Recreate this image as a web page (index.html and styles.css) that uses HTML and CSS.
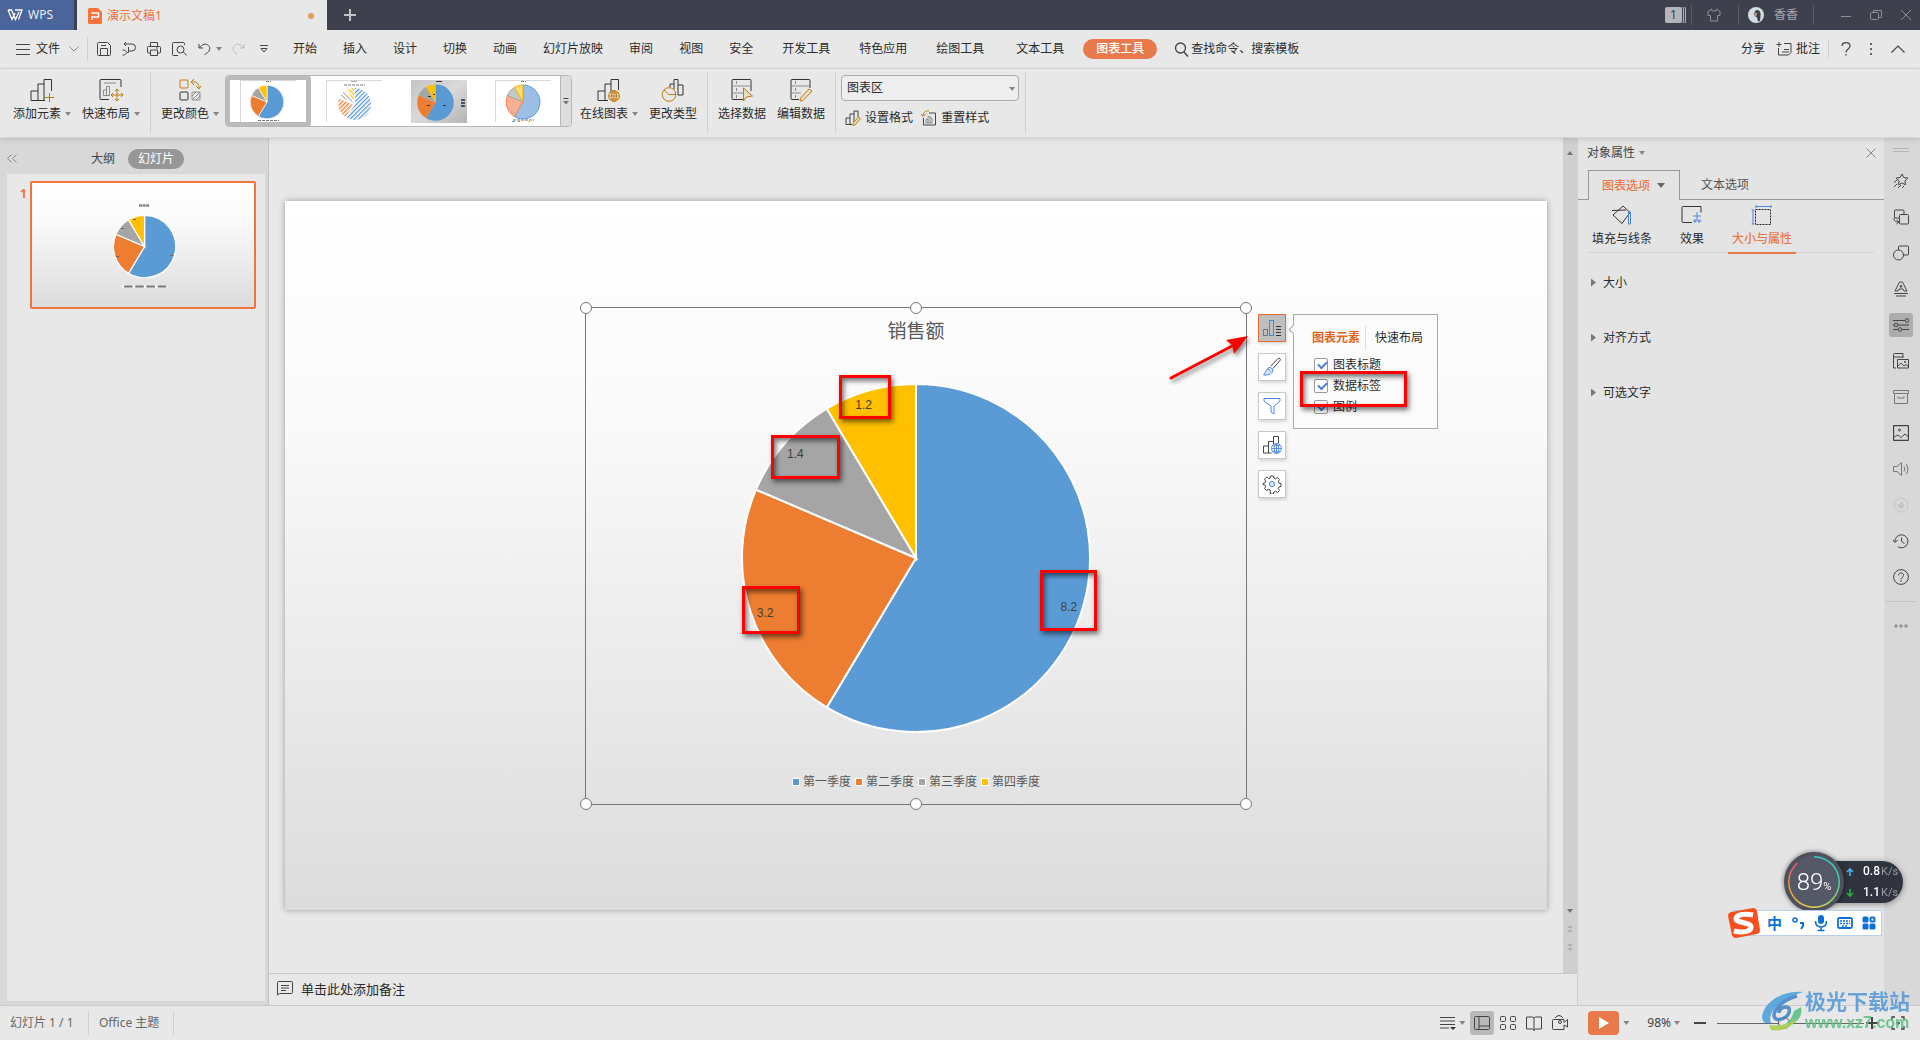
FILE: index.html
```html
<!DOCTYPE html>
<html lang="zh-CN">
<head>
<meta charset="utf-8">
<title>演示文稿1 - WPS</title>
<link rel="stylesheet" href="styles.css">
</head>
<body>
<svg class="defs" aria-hidden="true">
  <symbol id="pie" viewBox="0 0 350 350">
    <path class="q1" d="M175 175V2A173 173 0 1 1 86.3 323.5Z"/>
    <path class="q2" d="M175 175L86.3 323.5A173 173 0 0 1 15.9 107Z"/>
    <path class="q3" d="M175 175L15.9 107A173 173 0 0 1 86.3 26.5Z"/>
    <path class="q4" d="M175 175L86.3 26.5A173 173 0 0 1 175 2Z"/>
  </symbol>
  <symbol id="globe" viewBox="0 0 12 12">
    <circle cx="6" cy="6" r="5.4"/><ellipse cx="6" cy="6" rx="2.4" ry="5.4"/><path d="M6 .6v10.8M.6 6h10.8M1.6 3h8.8M1.6 9h8.8"/>
  </symbol>
  <g stroke="none">
  <pattern id="h1" width="3" height="3" patternUnits="userSpaceOnUse" patternTransform="rotate(45)"><rect width="1.3" height="3" fill="#5b9bd5"/></pattern>
  <pattern id="h2" width="3" height="3" patternUnits="userSpaceOnUse" patternTransform="rotate(45)"><rect width="1.3" height="3" fill="#ed7d31"/></pattern>
  <pattern id="h3" width="3" height="3" patternUnits="userSpaceOnUse" patternTransform="rotate(-45)"><rect width="1" height="3" fill="#a5a5a5"/></pattern>
  <pattern id="h4" width="3" height="3" patternUnits="userSpaceOnUse" patternTransform="rotate(-45)"><rect width="1.3" height="3" fill="#ffc000"/></pattern>
  </g>
  <linearGradient id="tb" x1="0" y1="0" x2="1" y2="1"><stop offset="0" stop-color="#c4c4c4"/><stop offset=".5" stop-color="#d9d9d9"/><stop offset="1" stop-color="#b4b4b4"/></linearGradient>
</svg>

<header class="titlebar">
  <button class="wps-tab"><svg width="16" height="12" viewBox="0 0 16 12"><path d="M1 1h3.500l4 9.500L12 3M1 1l4 9.500L8 4M8 1h7l-3.500 9.500" stroke-width="1.300"/></svg>WPS</button>
  <div class="doc-tab">
    <svg width="14" height="16" viewBox="0 0 14 16"><path d="M1.500 0H10l4 4v10.500a1.500 1.500 0 0 1-1.500 1.500h-11A1.500 1.500 0 0 1 0 14.500v-13A1.500 1.500 0 0 1 1.500 0z" fill="#f5733c" stroke="none"/><path d="M3.500 5h7v4h-6.500v3" stroke="#fff" stroke-width="1.500"/></svg>
    <span>演示文稿1</span><i class="dirty"></i>
  </div>
  <button class="new-tab" aria-label="新建"><svg width="12" height="12" viewBox="0 0 12 12"><path d="M6 0v12M0 6h12" stroke-width="2"/></svg></button>
  <div class="title-right">
    <span class="badge">1</span><i class="tsep"></i>
    <svg class="shirt" width="14" height="14" viewBox="0 0 14 14"><path d="M4.500 1L1 3.500v4h2.500V13h7V7.500H13v-4L9.500 1 9 3H5z"/></svg><i class="tsep"></i>
    <svg class="avatar" width="16" height="16" viewBox="0 0 16 16"><circle cx="8" cy="8" r="8" fill="#d3dde2" stroke="none"/><path d="M9 3c3 0 4 3 3.500 6l-.5 5-2 .5-1-4-3-2C6 5.500 7 3 9 3z" fill="#3d3f4a" stroke="none"/><path d="M7 5.500l2 .5-1 4-2-1z" fill="#c9a195" stroke="none"/></svg>
    <span class="user">香香</span><i class="tsep"></i>
    <button class="win" aria-label="最小化"><svg width="12" height="12" viewBox="0 0 12 12"><path d="M1 7.500h10"/></svg></button>
    <button class="win" aria-label="还原"><svg width="12" height="12" viewBox="0 0 12 12"><rect x=".5" y="3.500" width="8" height="7" rx="1"/><path d="M3.500 3V1.500h8v7H9"/></svg></button>
    <button class="win" aria-label="关闭"><svg width="12" height="12" viewBox="0 0 12 12"><path d="M1 1l10 10M11 1L1 11"/></svg></button>
  </div>
</header>

<nav class="menubar">
  <button class="file"><svg width="14" height="12" viewBox="0 0 14 12"><path d="M0 1.500h14M0 6.500h14M0 11.500h14"/></svg><span>文件</span><svg class="chev" width="10" height="6" viewBox="0 0 10 6"><path d="M.5.500L5 5 9.500.500"/></svg></button>
  <i class="sep tall"></i>
  <div class="quick">
    <button aria-label="保存"><svg width="14" height="14" viewBox="0 0 14 14"><path d="M.5 1.500a1 1 0 0 1 1-1h9l3 3v9a1 1 0 0 1-1 1h-11a1 1 0 0 1-1-1zM3.500 13V6.500h7V13M4 3.500h5"/></svg></button>
    <button aria-label="输出"><svg width="14" height="14" viewBox="0 0 14 14"><path d="M2 2h8a3 3 0 0 1 0 7H6.500V5M4 0L2 2l2 2M.5 8h2L5 10.500 2.500 13H.5M5 10.500h1.500V8"/></svg></button>
    <button aria-label="打印"><svg width="14" height="14" viewBox="0 0 14 14"><path d="M3.500 4V.5h7V4M3.500 11h-2a1 1 0 0 1-1-1V5.500a1 1 0 0 1 1-1h11a1 1 0 0 1 1 1V10a1 1 0 0 1-1 1h-2M3.500 8h7v5.500h-7zM9 6h2"/></svg></button>
    <button aria-label="预览"><svg width="15" height="14" viewBox="0 0 15 14"><path d="M6 13.500H1.500a1 1 0 0 1-1-1v-11a1 1 0 0 1 1-1h10a1 1 0 0 1 1 1V3M11.500 10l3 3.500"/><circle cx="8.500" cy="7.500" r="3.500"/></svg></button>
    <button class="undo" aria-label="撤销"><svg width="14" height="14" viewBox="0 0 14 14"><path d="M1 2v4h4M1.500 6C4 2 8 1 10.500 3.500S12 10 6.500 12.500"/></svg><i class="caret"></i></button>
    <button class="dim" aria-label="重做"><svg width="14" height="14" viewBox="0 0 14 14"><path d="M13 2v4H9M12.500 6C10 2 6 1 3.500 3.500S2 10 6.500 12.500"/></svg></button>
    <button aria-label="自定义"><svg width="8" height="8" viewBox="0 0 8 8"><path d="M0 .5h8M1 3.500h6L4 7z"/></svg></button>
  </div>
  <div class="tabs">
    <a href="#">开始</a><a href="#">插入</a><a href="#">设计</a><a href="#">切换</a><a href="#">动画</a><a href="#">幻灯片放映</a><a href="#">审阅</a><a href="#">视图</a><a href="#">安全</a>
    <a class="wide" href="#">开发工具</a><a class="wide" href="#">特色应用</a><a class="wide" href="#">绘图工具</a><a class="wide last" href="#">文本工具</a><a class="current" href="#">图表工具</a>
  </div>
  <button class="search"><svg width="15" height="15" viewBox="0 0 15 15"><circle cx="6.500" cy="6" r="5" stroke-width="1.300"/><path d="M10 10l4 4.500" stroke-width="1.500"/></svg>查找命令、搜索模板</button>
  <div class="menu-right">
    <button>分享</button>
    <button class="comment"><svg width="16" height="14" viewBox="0 0 16 14"><path d="M8 1.500h7v9L12.500 13h-10V6M3 0v5M.5 2.500h5M8 7.500h5M6 10h7"/></svg>批注</button>
    <i class="sep"></i>
    <button class="ic" aria-label="帮助"><svg width="10" height="14" viewBox="0 0 10 14"><path d="M1 4c0-4.500 8-4.500 8 0 0 3-4 3-4 6.500M5 12v1.500" stroke-width="1.200"/></svg></button>
    <button class="ic" aria-label="更多"><svg width="4" height="14" viewBox="0 0 4 14"><path d="M2 1v2M2 6v2M2 11v2" stroke-width="1.600"/></svg></button>
    <button class="ic" aria-label="折叠"><svg width="14" height="8" viewBox="0 0 14 8"><path d="M.5 7.500L7 1l6.500 6.500" stroke-width="1.200"/></svg></button>
  </div>
</nav>

<section class="ribbon">
  <button class="tool"><svg width="24" height="24" viewBox="0 0 24 24"><path d="M1 22.500V13h7v9.500H1M8 13V6h6v16.500H8M14 6V1.500h7.500V13M14 22.500h1"/><path class="gold" d="M19.500 15v9M15 19.500h9"/></svg><span>添加元素<i class="caret"></i></span></button>
  <button class="tool"><svg width="24" height="24" viewBox="0 0 24 24"><path d="M10 21.500H2a1 1 0 0 1-1-1v-18a1 1 0 0 1 1-1h19a1 1 0 0 1 1 1V9"/><path class="gray" d="M5 5h12M4.500 17.500V12h3v5.500zM7.500 12V8.500h3v9h-3"/><path class="gold" d="M18 11v12M12 17h12M16 13l2-2 2 2M16 21l2 2 2-2M14 15l-2 2 2 2M22 15l2 2-2 2"/></svg><span>快速布局<i class="caret"></i></span></button>
  <i class="sep"></i>
  <button class="tool"><svg width="24" height="24" viewBox="0 0 24 24"><rect class="gold" x="2" y="2" width="8" height="8" rx="1"/><path class="gold" d="M16 1l-3 3 3 3M13 4c6-1 8 2 8 6M18 8l3 3 2-3"/><rect x="2" y="14" width="8" height="8" rx="1"/><rect class="gray" x="14" y="14" width="8" height="8" rx="1"/><path class="gray" d="M14 18l4-4M14 22l8-8M18 22l4-4"/></svg><span>更改颜色<i class="caret"></i></span></button>
  <div class="gallery">
    <button class="thumb selected" aria-label="样式 1"><svg width="56" height="43" viewBox="0 0 56 43"><path d="M0 .5h56M.5 0v42" stroke="#d8d8d8"/><path d="M26 1.500h5M18 40.500h21" stroke="#777" stroke-dasharray="3 1"/><use href="#pie" class="thick" x="10" y="5" width="34" height="34"/></svg></button>
    <button class="thumb" aria-label="样式 2"><svg width="56" height="43" viewBox="0 0 56 43"><path d="M0 .5h56M.5 0v42" stroke="#d8d8d8"/><path d="M25 1.500h6" stroke="#aaa"/><path d="M18 5h21" stroke="#777" stroke-dasharray="3 1"/><g transform="translate(12 8)" stroke="none"><path d="M17 16V0a16 16 0 1 1-8.200 29.700z" fill="url(#h1)"/><path d="M15.500 17L7.500 29A16 16 0 0 1 1 10.500z" fill="url(#h2)"/><path d="M15.500 15L1.500 9A16 16 0 0 1 7.500 2.500z" fill="url(#h3)"/><path d="M16 14L9 1.800A16 16 0 0 1 16 0z" fill="url(#h4)"/></g></svg></button>
    <button class="thumb" aria-label="样式 3"><svg width="56" height="43" viewBox="0 0 56 43"><rect width="56" height="43" fill="url(#tb)" stroke="none"/><use href="#pie" class="flat" x="6" y="4" width="37" height="37"/><path d="M25 1.500h6M16 25.500h3M32 25.500h3M17 16.500h3M22 14.500h2" stroke="#333"/><path d="M52 19v8" stroke="#456" stroke-width="4" stroke-dasharray="2 1"/></svg></button>
    <button class="thumb" aria-label="样式 4"><svg width="56" height="43" viewBox="0 0 56 43"><path d="M0 .5h56M.5 0v42" stroke="#d8d8d8"/><path d="M26 1.500h5M18 40h21" stroke="#777" stroke-dasharray="3 1"/><path d="M17 41.500h3" stroke="#5b9bd5"/><path d="M23 41.500h2" stroke="#ed7d31"/><path d="M33 41.500h2" stroke="#ffc000"/><path d="M28 22V5a17 17 0 1 1-8.700 31.600z" fill="#9dbfe6" stroke="#5b9bd5"/><path d="M28 22l-8.700 14.600A17 17 0 0 1 12.400 15.300z" fill="#f5b095" stroke="#f08a5d"/><path d="M28 22l-15.600-6.700A17 17 0 0 1 19.300 7.400z" fill="#c8c8c8" stroke="#a5a5a5"/><path d="M28 22L19.300 7.400A17 17 0 0 1 28 5z" fill="#ffd978" stroke="#ecb800"/></svg></button>
    <button class="more" aria-label="更多样式"><svg width="6" height="7" viewBox="0 0 6 7"><path d="M.5.500h5"/><path d="M0 3h6L3 6.500z" fill="#777" stroke="none"/></svg></button>
  </div>
  <button class="tool online"><svg width="24" height="24" viewBox="0 0 24 24"><path d="M1 22.500V13h7v9.500H1M8 13V6h6v8M8 22.500h3M14 6V1.500h7.500V12"/><use class="gold" href="#globe" x="11" y="12" width="12" height="12"/></svg><span>在线图表<i class="caret"></i></span></button>
  <button class="tool"><svg width="24" height="24" viewBox="0 0 24 24"><path d="M9 9V6h4V1.500h4V17h5V7h-5M13 6v5"/><circle class="gold" cx="8" cy="16.500" r="6.800"/><path class="gold" d="M3 12l5 4.500h7"/></svg><span>更改类型</span></button>
  <i class="sep"></i>
  <button class="tool"><svg width="24" height="24" viewBox="0 0 24 24"><path d="M13 21.500H3a1 1 0 0 1-1-1v-18a1 1 0 0 1 1-1h17a1 1 0 0 1 1 1V13"/><path class="gray" d="M2 8h19M2 15h11M6.500 3v3M6.500 10v3M6.500 17v3"/><path class="gold fill" d="M13.500 10v13l3-4 6-1z"/></svg><span>选择数据</span></button>
  <button class="tool"><svg width="24" height="24" viewBox="0 0 24 24"><path d="M10 21.500H3a1 1 0 0 1-1-1v-18a1 1 0 0 1 1-1h17a1 1 0 0 1 1 1V10"/><path class="gray" d="M2 8h19M2 15h10M6.500 3v3M6.500 10v3M6.500 17v3"/><path class="gold fill" d="M11.500 20L20 11l3 2-9 9.500-3 .5z"/></svg><span>编辑数据</span></button>
  <i class="sep"></i>
  <div class="area">
    <select aria-label="图表元素"><option>图表区</option></select>
    <i class="caret"></i>
    <div class="pair">
      <button><svg width="16" height="16" viewBox="0 0 16 16"><path d="M1 14.500V8h4v6.500zM5 8V4h4v8M9 4V1h4v6M5 14.500h2"/><path class="gold fill" d="M8 13l5.500-6 2 1.500L10 15l-2 .5z"/></svg>设置格式</button>
      <button><svg width="16" height="16" viewBox="0 0 16 16"><path d="M8 3h6.500v12h-12V8"/><path class="gold" d="M8 1C4 .5 2 3 2 6M0 4l2 2.500L4.500 4"/><path class="gray" d="M5 13V9.500h2V6.500h2V8h2v5zM7 9.500V13M9 8v5"/></svg>重置样式</button>
    </div>
  </div>
  <i class="sep"></i>
</section>

<main class="work">
  <aside class="outline">
    <div class="outline-head">
      <button class="collapse" aria-label="收起"><svg width="10" height="9" viewBox="0 0 10 9"><path d="M4.500.500l-4 4 4 4M9.500.500l-4 4 4 4"/></svg></button>
      <button>大纲</button><button class="on">幻灯片</button>
    </div>
    <div class="slides">
      <span class="num">1</span>
      <button class="mini" aria-label="幻灯片 1">
        <svg viewBox="0 0 222 124"><path d="M107 22.500h10" stroke="#888" stroke-width="2.500" stroke-dasharray="3 .5"/><use href="#pie" class="thick" x="81" y="32" width="63" height="63"/><path d="M90 103.500h45" stroke="#fff" stroke-width="2"/><path d="M92 103.500h43" stroke="#777" stroke-width="2" stroke-dasharray="8.500 2.700"/><path d="M84 73.500h3M138 72.500h3M89 45.500h3M101 36.500h3" stroke="#666"/></svg>
      </button>
    </div>
  </aside>

  <div class="center">
    <div class="stage-row">
      <div class="stage">
        <div class="slide">
          <div class="chart">
            <h1>销售额</h1>
            <svg class="pie" width="352" height="352" viewBox="0 0 350 350">
              <use href="#pie" width="350" height="350"/>
              <text x="327" y="228">8.2</text><text x="25" y="234">3.2</text><text x="55" y="76">1.4</text><text x="123" y="27">1.2</text>
            </svg>
            <ul class="legend"><li><i class="k1"></i>第一季度</li><li><i class="k2"></i>第二季度</li><li><i class="k3"></i>第三季度</li><li><i class="k4"></i>第四季度</li></ul>
            <i class="handle tl"></i><i class="handle tm"></i><i class="handle tr"></i><i class="handle bl"></i><i class="handle bm"></i><i class="handle br"></i>

            <div class="side-tools">
              <button class="on" aria-label="图表元素"><svg width="20" height="20" viewBox="0 0 20 20"><rect x="1.500" y="11.500" width="4" height="6" stroke="#777"/><rect class="blue" x="7.500" y="2.500" width="4" height="15"/><path d="M14 8.500h5M14 11.500h5M14 14.500h5M14 17.500h5" stroke="#333"/></svg></button>
              <button aria-label="样式"><svg width="20" height="20" viewBox="0 0 20 20"><path d="M9 9l7-7.500c1.500-1 3 .5 2 2L11 11.500" /><path class="blue" d="M8 10l3 2.500c0 4-4 6-9.500 5.500C4 16 4 11 8 10zM6 12l2.500 2.500" fill="#dbe6fb"/></svg></button>
              <button aria-label="筛选"><svg width="20" height="20" viewBox="0 0 20 20"><path class="blue" d="M2 2.500h16V5l-6 5v8l-3-2v-6L2 5z"/></svg></button>
              <button aria-label="在线图表"><svg width="20" height="20" viewBox="0 0 20 20"><path d="M1.500 18V11h5v7zM6.500 11V6.500h5V9M6.500 18h3M11.500 6.500v-5h5V8"/><use class="blue" href="#globe" x="9" y="8" width="11" height="11"/></svg></button>
              <button aria-label="设置"><svg width="20" height="20" viewBox="0 0 20 20"><path d="M8.500 2h3l.5 2.200 1.500.6 2-1.200 2 2-1.200 2 .6 1.500 2.100.4v3l-2.100.5-.6 1.500 1.200 2-2 2-2-1.200-1.500.6-.5 2.100h-3L8 15.900l-1.500-.6-2 1.200-2-2 1.200-2-.6-1.500L1 10.500v-1l2.100-.9.600-1.500-1.200-2 2-2 2 1.200L8 4.200z"/><circle class="blue" cx="10" cy="10" r="2.600" fill="#dbe6fb"/></svg></button>
            </div>

            <div class="popup">
              <div class="popup-tabs"><button class="on">图表元素</button><button>快速布局</button></div>
              <label><input type="checkbox" checked>图表标题</label>
              <label><input type="checkbox" checked>数据标签</label>
              <label><input type="checkbox" checked>图例</label>
            </div>

            <i class="mark m1"></i><i class="mark m2"></i><i class="mark m3"></i><i class="mark m4"></i><i class="mark m5"></i>
            <svg class="arrow" width="84" height="52" viewBox="0 0 84 52"><path d="M3 46L66 13" stroke="#f00" stroke-width="3" stroke-linecap="round"/><path d="M80 4L58 8l6 5 2 9z" fill="#f00" stroke="none"/></svg>
          </div>
        </div>
      </div>
      <div class="scroll"><i class="up"></i><div class="scroll-end"><i class="down"></i><svg width="6" height="7" viewBox="0 0 6 7"><path d="M0 3L3 0l3 3zM0 7l3-3 3 3z"/></svg><svg width="6" height="7" viewBox="0 0 6 7"><path d="M0 0h6L3 3zM0 4h6L3 7z"/></svg></div></div>
    </div>
    <div class="notes"><svg width="16" height="15" viewBox="0 0 16 15"><path d="M.5 14V1.500a1 1 0 0 1 1-1h13a1 1 0 0 1 1 1v10a1 1 0 0 1-1 1h-12zM4 4.500h8M4 7h8M4 9.500h5"/></svg>单击此处添加备注</div>
  </div>

  <aside class="props">
    <div class="props-title"><span>对象属性</span><i class="caret"></i><button aria-label="关闭"><svg width="10" height="10" viewBox="0 0 10 10"><path d="M.5.500l9 9M9.500.500l-9 9"/></svg></button></div>
    <div class="props-tabs"><button class="on">图表选项<i class="caret big"></i></button><button>文本选项</button></div>
    <div class="props-sub">
      <button><svg width="22" height="20" viewBox="0 0 22 20"><path d="M12 1l7 6.500-8 11L2 10zM1 5.500l14-.5" /><path class="blue" d="M17.500 7h2v12h-2z"/></svg>填充与线条</button>
      <button class="fx"><svg width="22" height="20" viewBox="0 0 22 20"><path d="M11 17.500H2a1 1 0 0 1-1-1V2.500a1 1 0 0 1 1-1h18v6"/><path class="blue" d="M16 7v8M12 11h8M14 14v4M12 16h4M18 14v4M16.500 16h4"/></svg>效果</button>
      <button class="on"><svg width="22" height="20" viewBox="0 0 22 20"><path class="blue" d="M5 1.500h15M5 0v3M20 0v3M2 5v14M.5 5h3M.5 19h3"/><rect x="4.500" y="4.500" width="15" height="15" stroke="#222" stroke-dasharray="2 1"/></svg>大小与属性</button>
    </div>
    <button class="fold">大小</button><button class="fold">对齐方式</button><button class="fold">可选文字</button>
  </aside>

  <aside class="rail">
    <i class="grip"></i>
    <button aria-label="动画"><svg width="16" height="16" viewBox="0 0 16 16"><path d="M9 1l1.800 3.500 4 .6-2.900 2.800.7 3.900L9 10l-3.600 1.800.7-3.900-2.900-2.800 4-.6zM4 7L1 9.500M4 11l-3 3M8 12l-3 3M11 13l-2 2"/></svg></button>
    <button aria-label="切换"><svg width="16" height="16" viewBox="0 0 16 16"><rect x="1.500" y="1" width="9.500" height="8" rx="1"/><rect x="6.500" y="5.500" width="9" height="9.500" rx="1" fill="#d8d8d8"/><path d="M1 9c0 3 1 4 5 4M3.500 11L6 13l-2.500 2"/></svg></button>
    <button aria-label="形状"><svg width="16" height="16" viewBox="0 0 16 16"><rect x="5.500" y="1" width="10" height="9" rx="1"/><circle cx="5.500" cy="10" r="5" fill="#d8d8d8"/></svg></button>
    <button aria-label="艺术字"><svg width="16" height="16" viewBox="0 0 16 16"><path d="M2 10L6.500 1h3L14 10h-3l-1-2H6l-1 2zM7 6h2L8 4zM1 12.500h14M3 15h10"/></svg></button>
    <button class="on" aria-label="属性"><svg width="16" height="16" viewBox="0 0 16 16"><path d="M0 3.500h12M5 8h11M0 8h1M0 12.500h5M9 12.500h7"/><circle cx="14" cy="3.500" r="1.800"/><circle cx="3" cy="8" r="1.800"/><circle cx="7" cy="12.500" r="1.800"/></svg></button>
    <button aria-label="版式"><svg width="16" height="16" viewBox="0 0 16 16"><path d="M3 15H.5V1.500a1 1 0 0 1 1-1H10V5M.5 4H10M4.500 6.500h11v8.500h-11zM5 13l3-3 3 3 2-1.500 2 1.500"/><circle cx="12" cy="9" r=".7"/></svg></button>
    <button aria-label="素材"><svg class="soft" width="16" height="16" viewBox="0 0 16 16"><path d="M.5 1.500h15v3H.5zM1.500 4.500v10h13v-10M5 7.500v1.500h6V7.500"/></svg></button>
    <button aria-label="图片"><svg width="16" height="16" viewBox="0 0 16 16"><rect x=".5" y=".5" width="15" height="15" rx="1" stroke-width="1.300"/><path d="M1 12l4-2 3 2.500L12 9l3 2.500"/><circle cx="6.500" cy="5" r="1"/></svg></button>
    <button aria-label="声音"><svg class="soft" width="16" height="16" viewBox="0 0 16 16"><path d="M.5 5.500H4L8.500 1.500v13L4 10.500H.5zM11 5.500q1.500 2.500 0 5M13.500 3q3 5 0 10"/></svg></button>
    <button aria-label="稻壳"><svg class="faint" width="16" height="16" viewBox="0 0 16 16"><path d="M8 .5l6.500 3.700v7.600L8 15.500l-6.500-3.700V4.200z"/><path d="M8 11q-3-1-3-4 3 1 3 4zM8 11q-1-4 1-6 2 2-1 6zM8 11q1-3 3-3 0 3-3 3z" fill="#c4c4c4"/></svg></button>
    <button aria-label="历史"><svg width="16" height="16" viewBox="0 0 16 16"><path d="M2 9A6.500 6.500 0 1 1 5 13.800M0 7l2 2.500L4.500 7M8.500 4.500V8l3 3"/></svg></button>
    <button aria-label="帮助"><svg width="16" height="16" viewBox="0 0 16 16"><circle cx="8" cy="8" r="7.400"/><path d="M5.500 6.500c0-3.500 5-3.500 5 0 0 1.800-2.500 2-2.500 4M8 11.500V13"/></svg></button>
    <i class="rail-line"></i>
    <button aria-label="更多"><svg class="soft" width="14" height="4" viewBox="0 0 14 4"><circle cx="2" cy="2" r="1.200"/><circle cx="7" cy="2" r="1.200"/><circle cx="12" cy="2" r="1.200"/></svg></button>
  </aside>
</main>

<footer class="status">
  <span class="page">幻灯片 1 / 1</span><i class="sep"></i><span class="theme">Office 主题</span><i class="sep"></i>
  <div class="views">
    <button class="lines" aria-label="备注"><svg width="16" height="14" viewBox="0 0 16 14"><path d="M0 1.500h15M0 5h15M0 8.500h15M0 12h9"/><path d="M10 11h6l-3 3z" fill="#333" stroke="none"/></svg><i class="caret"></i></button>
    <button class="on" aria-label="普通视图"><svg width="16" height="14" viewBox="0 0 16 14"><rect x=".5" y=".5" width="15" height="13" rx="1"/><path d="M5 1v12M5 10h10"/></svg></button>
    <button aria-label="浏览"><svg width="16" height="14" viewBox="0 0 16 14"><rect x=".5" y=".5" width="5" height="5" rx="1"/><rect x="10.500" y=".5" width="5" height="5" rx="1"/><rect x=".5" y="8.500" width="5" height="5" rx="1"/><rect x="10.500" y="8.500" width="5" height="5" rx="1"/></svg></button>
    <button aria-label="阅读"><svg width="16" height="15" viewBox="0 0 16 15"><path d="M8 2v13M.5 1h6L8 2l1.500-1h6v12h-6L8 14l-1.500-1h-6z"/></svg></button>
    <button aria-label="录制"><svg width="16" height="16" viewBox="0 0 16 16"><path d="M3 3q4-5 8 0M1.500 4.500h10.500v3l3.500-3V12L12 10v4.500H1.500a1 1 0 0 1-1-1v-8a1 1 0 0 1 1-1z"/><circle cx="8" cy="7" r="1.500"/></svg></button>
    <button class="play" aria-label="放映"><svg width="10" height="12" viewBox="0 0 10 12"><path d="M0 0l10 6-10 6z" fill="#fff" stroke="none"/></svg></button>
    <i class="caret"></i>
    <span class="zoom">98%</span><i class="caret"></i>
    <button class="step" aria-label="缩小"><svg width="12" height="12" viewBox="0 0 12 12"><path d="M0 6h12" stroke-width="2"/></svg></button>
    <input type="range" min="0" max="100" value="45" aria-label="缩放">
    <button aria-label="放大"><svg width="12" height="12" viewBox="0 0 12 12"><path d="M0 6h12M6 0v12" stroke-width="2"/></svg></button>
    <button class="fit" aria-label="适应窗口"><svg width="14" height="14" viewBox="0 0 14 14"><path d="M1 4V1h3M10 1h3v3M13 10v3h-3M4 13H1v-3M5 7h4M7 5v4" stroke-width="1.300"/></svg></button>
  </div>
</footer>

<div class="meter">
  <div class="speeds">
    <p><svg width="8" height="8" viewBox="0 0 8 8"><path d="M4 8V1M1 4l3-3 3 3" stroke="#4fb4ee" stroke-width="1.600"/></svg><b>0.8</b>K/s</p>
    <p><svg width="8" height="8" viewBox="0 0 8 8"><path d="M4 0v7M1 4l3 3 3-3" stroke="#2eae4a" stroke-width="1.600"/></svg><b>1.1</b>K/s</p>
  </div>
  <div class="dial"><div class="dial-face"><span>89</span><small>%</small></div></div>
</div>
<div class="ime">
  <svg class="sogou" width="32" height="32" viewBox="0 0 32 32"><path d="M3 5l22-4q3 0 4 3l3 19q0 3-3 4L8 31q-3 0-4-3L0 9q0-3 3-4z" fill="#f4511e" stroke="none"/><path d="M25 8C15 6 8 8 8 12s15 3 15 8-9 6-17 4" stroke="#fff" stroke-width="5"/></svg>
  <b>中</b>
  <svg width="14" height="14" viewBox="0 0 14 14"><circle cx="4" cy="4" r="2" stroke="#0f6fd8" stroke-width="1.600"/><path d="M9 7h3v3l-2 3" stroke="#0f6fd8" stroke-width="2"/></svg>
  <svg width="14" height="18" viewBox="0 0 14 18"><rect x="4" y="1" width="6" height="9" rx="3" fill="#0f6fd8" stroke="none"/><path d="M1.500 7q0 6 5.500 6t5.500-6M7 13v3M3.500 16.500h7" stroke="#0f6fd8" stroke-width="1.600"/></svg>
  <svg width="16" height="12" viewBox="0 0 16 12"><rect x="1" y="1" width="14" height="10" rx="1.500" stroke="#0f6fd8" stroke-width="1.800"/><path d="M3 4h10M3 6.500h10M5 9h6" stroke="#0f6fd8" stroke-width="1.300" stroke-dasharray="2 1"/></svg>
  <svg width="14" height="14" viewBox="0 0 14 14"><g fill="#0f6fd8" stroke="none"><rect x=".5" y=".5" width="6" height="6" rx="1.500"/><rect x=".5" y="7.500" width="6" height="6" rx="1.500"/><rect x="7.500" y="7.500" width="6" height="6" rx="1.500"/></g><rect x="8.500" y="1.500" width="4" height="4" rx="1" stroke="#0f6fd8" stroke-width="2"/></svg>
</div>
<div class="brand">
  <svg width="44" height="42" viewBox="0 0 44 42"><path d="M42 2C22 0 2 12 1 28c1 5 5 6 9 5C6 22 18 10 42 2z" fill="#4da3dc" stroke="none"/><path d="M36 6C20 10 8 24 15 29c7 2 15-4 13-11-5-3-10 1-10 5" stroke="#4a86c8" stroke-width="3.500"/><path d="M40 17c3 10-8 22-23 20 9-2 14-8 16-16z" fill="#5cc083" stroke="none"/><path d="M8 35c12 1 22-1 28-7-4 9-14 14-26 12z" fill="#a8d04e" stroke="none"/></svg>
  <div><strong>极光下载站</strong><a href="#">www.xz7.com</a></div>
</div>
</body>
</html>
```
FILE: styles.css
```css
* { box-sizing: border-box; }
html, body { height: 100%; }
body {
  margin: 0; display: flex; flex-direction: column; overflow: hidden;
  background: #e8e8e8; color: #2b2b2b;
  font: 12px/18px "Noto Sans", "Noto Sans CJK SC", sans-serif;
  --q1: #5b9bd5; --q2: #ed7d31; --q3: #a5a5a5; --q4: #ffc000; --accent: #e8794a;
}
button, select, input { font: inherit; color: inherit; margin: 0; }
button { padding: 0; border: 0; background: none; display: flex; align-items: center; white-space: nowrap; }
a { color: inherit; text-decoration: none; }
i { font-style: normal; flex: none; }
svg { display: block; flex: none; fill: none; stroke: #444; }
svg.defs { position: absolute; width: 0; height: 0; }
.q1 { fill: var(--q1); } .q2 { fill: var(--q2); } .q3 { fill: var(--q3); } .q4 { fill: var(--q4); }
.gold { stroke: #c27a0e; } .gold.fill { fill: #e9dcc4; } .gray { stroke: #8c8c8c; } .blue { stroke: #4e86da; }
.soft { stroke: #777; } .faint { stroke: #c4c4c4; }
.thick { stroke: #fff; stroke-width: 7px; } .flat { stroke: none; }
.caret { width: 6px; height: 4px; background: #858585; clip-path: polygon(0 0, 100% 0, 50% 100%); }
.caret.big { width: 8px; height: 5px; background: #666; }
.sep { width: 1px; background: #cfcfcf; }

/* Window title */
.titlebar { display: flex; height: 30px; flex: none; background: #3e414d; color: #a4a6ae; }
.titlebar svg { stroke: #8d9099; }
.wps-tab { width: 74px; padding-left: 7px; gap: 5px; margin-right: 3px; background: #49659a; color: #e8edf5; }
.wps-tab svg { stroke: #fff; }
.doc-tab { width: 250px; padding: 2px 13px 0 11px; display: flex; align-items: center; gap: 5px; background: #e8e8e8; color: #e8713d; }
.dirty { width: 6px; height: 6px; margin-left: auto; border-radius: 50%; background: #e79b58; }
.new-tab { padding-left: 17px; }
.new-tab svg { stroke: #c3c4c8; }
.title-right { margin-left: auto; display: flex; align-items: center; padding-right: 8px; }
.badge { width: 21px; height: 16px; padding-left: 5px; line-height: 16px; border-radius: 2px; background: #b4b5ba; color: #3a3c46; box-shadow: inset -1px 0 #b4b5ba, inset -2px 0 #3e414d, inset -3px 0 #b4b5ba, inset -4px 0 #3e414d; }
.tsep { width: 1px; height: 20px; margin: 0 0 0 5px; background: #5a5d68; }
.shirt { margin: 0 12px 0 15px; }
.avatar { margin: 0 10px 0 9px; }
.user { margin-right: 10px; }
.win { width: 12px; margin-left: 18px; }
.tsep + .win { margin-left: 26px; }

/* Menu row */
.menubar { display: flex; align-items: center; height: 39px; flex: none; border-bottom: 1px solid #d4d4d4; padding-left: 16px; }
.file { gap: 6px; }
.file .chev { margin-left: 3px; stroke: #888; }
.sep.tall { height: 24px; margin-left: 8px; }
.quick { display: flex; align-items: center; gap: 11px; margin-left: 9px; }
.undo { gap: 4px; }
.undo + .dim { margin-left: -2px; }
.dim { margin-right: 4px; }
.dim svg { stroke: #bbb; }
.tabs { display: flex; align-items: center; gap: 26px; margin-left: 25px; white-space: nowrap; }
.tabs .wide { padding-left: 3px; }
.tabs .last { padding-left: 6px; }
.tabs .current { height: 20px; margin-left: -7px; padding: 0 13px; line-height: 20px; border-radius: 10px; background: var(--accent); color: #fff; font-weight: 500; }
.search { gap: 2px; margin-left: 17px; }
.menu-right { margin-left: auto; display: flex; align-items: center; padding-right: 15px; }
.comment { gap: 4px; margin-left: 11px; }
.menu-right .sep { height: 20px; margin: 0 12px 0 8px; }
.ic + .ic { margin-left: 18px; }

/* Ribbon */
.ribbon { display: flex; align-items: flex-start; height: 69px; flex: none; padding: 6px 0 0 13px; border-bottom: 1px solid #d4d4d4; position: relative; z-index: 1; box-shadow: 0 2px 5px #0000001a; }
.ribbon > .sep { height: 60px; margin: -2px 10px 0 10px; }
.tool { flex-direction: column; gap: 3px; padding-top: 3px; }
.tool + .tool { margin-left: 11px; }
.tool svg { stroke: #333; }
.tool span { display: flex; align-items: center; gap: 4px; }
.gallery { display: flex; width: 347px; height: 52px; margin: 0 8px 0 6px; border: 1px solid #b5b7bb; border-radius: 4px; background: #fff; overflow: hidden; }
.thumb { flex: none; width: 85px; justify-content: center; }
.thumb.selected { width: 86px; margin: -1px 0 -1px -1px; border: 5px solid #bbb; border-radius: 4px; }
.thumb:nth-child(4) { width: 79px; padding-right: 0; padding-left: 14px; justify-content: flex-start; }
.more { flex: 1; justify-content: center; background: #dcdddf; border-left: 1px solid #b5b7bb; }
.area { position: relative; margin: 0 -4px 0 -5px; }
.area select { display: block; width: 178px; height: 26px; padding: 0 5px; border: 1px solid #aaa; border-radius: 4px; background: #eee; appearance: none; }
.area > .caret { position: absolute; right: 4px; top: 12px; }
.pair { display: flex; gap: 8px; margin: 8px 0 0 4px; }
.pair button { gap: 4px; }

/* Workspace */
.work { flex: 1; min-height: 0; display: flex; }
.outline { width: 269px; display: flex; flex-direction: column; padding: 0 3px 4px 7px; background: #d8d8d8; border-right: 1px solid #c4c4c4; }
.outline-head { height: 36px; display: flex; align-items: center; padding-top: 5px; color: #444; }
.collapse { margin-right: 74px; }
.collapse svg { stroke: #888; }
.outline-head .on { height: 20px; margin-left: 13px; padding: 0 10px; border-radius: 10px; background: #979797; color: #fff; }
.slides { flex: 1; display: flex; align-items: flex-start; gap: 3px; padding: 7px 9px 0 13px; background: #e8e8e8; }
.num { margin-top: 4px; color: #f07440; font-weight: 700; }
.mini { flex: 1; border: 2px solid #f07440; border-radius: 2px; background: linear-gradient(#fff, #fafafa 30%, #dcdcdc); }
.mini svg { width: 100%; height: auto; }
.center { flex: 1; min-width: 0; display: flex; flex-direction: column; border-right: 1px solid #d0d0d0; }
.stage-row { flex: 1; min-height: 0; display: flex; }
.stage { flex: 1; min-width: 0; padding: 0 16px; display: flex; align-items: center; }
.slide { width: 100%; aspect-ratio: 16 / 9; display: grid; place-items: center; background: linear-gradient(#fff, #fafafa 30%, #dcdcdc); box-shadow: 0 0 6px #00000055; }
.scroll { width: 14px; padding: 13px 0 22px; display: flex; flex-direction: column; align-items: center; justify-content: space-between; background: #cfcfcf; }
.scroll .up, .scroll .down { width: 6px; height: 4px; background: #777; clip-path: polygon(0 100%, 100% 100%, 50% 0); }
.scroll .down { clip-path: polygon(0 0, 100% 0, 50% 100%); }
.scroll-end { display: flex; flex-direction: column; align-items: center; gap: 12px; }
.scroll svg { fill: #b0b0b0; stroke: none; }
.notes { height: 32px; display: flex; align-items: center; gap: 8px; padding: 0 0 2px 8px; border-top: 1px solid #c9c9c9; font-size: 13px; }

/* Chart object */
.chart { position: relative; width: 662px; height: 498px; border: 1px solid #777; display: flex; flex-direction: column; align-items: center; }
.chart h1 { margin: 9px 0 39px; color: #595959; font: 400 19px/26px "Noto Sans CJK SC", sans-serif; }
.pie { stroke: #fff; stroke-width: 2px; }
.pie text { font: 12px "Liberation Sans", sans-serif; fill: #404040; stroke: none; text-anchor: middle; }
.legend { display: flex; gap: 4px; margin: 38px 0 0; padding: 0; list-style: none; color: #595959; line-height: 20px; }
.legend li { display: flex; align-items: center; gap: 3px; }
.legend i { width: 8px; height: 8px; border: 1px solid #fff; }
.k1 { background: var(--q1); } .k2 { background: var(--q2); } .k3 { background: var(--q3); } .k4 { background: var(--q4); }
.handle { position: absolute; width: 12px; height: 12px; margin: -6px; border: 1px solid #777; border-radius: 50%; background: #fff; }
.tl { left: 0; top: 0; } .tm { left: 50%; top: 0; } .tr { left: 100%; top: 0; }
.bl { left: 0; top: 100%; } .bm { left: 50%; top: 100%; } .br { left: 100%; top: 100%; }
.side-tools { position: absolute; left: 672px; top: 6px; display: flex; flex-direction: column; gap: 11px; }
.side-tools button { width: 28px; height: 28px; justify-content: center; background: #fff; border: 1px solid #c8c8c8; box-shadow: 1px 2px 3px #00000022; }
.side-tools .on { background: #bfbfbf; border-color: #e0702e; }
.popup { position: absolute; left: 707px; top: 6px; width: 145px; height: 115px; padding: 12px 0 0 21px; background: #fbfbfb; border: 1px solid #aaa; }
.popup::before { content: ""; position: absolute; left: -4px; top: 11px; width: 6px; height: 6px; border: solid #aaa; border-width: 0 0 1px 1px; background: #fbfbfb; transform: rotate(45deg); }
.popup-tabs { display: flex; height: 24px; margin: -1px 0 5px -3px; }
.popup-tabs button + button { margin-left: 5px; padding-left: 9px; border-left: 1px solid #ddd; }
.popup-tabs .on { color: #e0651c; font-weight: 700; }
.popup label { display: flex; align-items: center; height: 21px; gap: 5px; }
.popup input { appearance: none; position: relative; width: 14px; height: 14px; margin-left: -1px; border: 1px solid #999; border-radius: 2px; background: #fff; }
.popup input:checked::after { content: ""; position: absolute; left: 3px; top: 2px; width: 7px; height: 4px; border: solid #4a7fd0; border-width: 0 0 2px 2px; transform: rotate(-45deg); }
.mark { position: absolute; border: 3px solid #f00; box-shadow: 2px 3px 5px #0008, inset 2px 3px 5px #0008; }
.m1 { left: 253px; top: 67px; width: 52px; height: 44px; }
.m2 { left: 185px; top: 127px; width: 69px; height: 44px; }
.m3 { left: 156px; top: 278px; width: 58px; height: 48px; }
.m4 { left: 454px; top: 262px; width: 57px; height: 61px; }
.m5 { left: 714px; top: 63px; width: 107px; height: 36px; }
.arrow { position: absolute; left: 582px; top: 24px; filter: drop-shadow(2px 3px 2px #0007); }

/* Property pane */
.props { width: 306px; flex: none; background: #e4e4e4; }
.props-title { display: flex; align-items: center; height: 32px; padding: 0 8px 2px 9px; gap: 4px; color: #444; }
.props-title button { margin-left: auto; }
.props-title svg { stroke: #888; }
.props-tabs { display: flex; height: 30px; padding-left: 10px; color: #555; box-shadow: inset 0 -1px #999; }
.props-tabs button { padding: 0 21px; }
.props-tabs .on { width: 92px; padding: 0 0 0 13px; gap: 7px; color: var(--accent); font-weight: 500; background: #e4e4e4; border: 1px solid #999; border-bottom: 0; }
.props-sub { display: flex; margin: 0 10px 0; padding-left: 4px; height: 53px; border-bottom: 1px solid #d2d2d2; }
.props-sub button { flex-direction: column; gap: 5px; padding-top: 5px; }
.props-sub .fx { margin: 0 24px 0 28px; }
.props-sub .on { height: 54px; margin-bottom: -1px; padding: 5px 4px 0; color: var(--accent); font-weight: 500; border-bottom: 2px solid var(--accent); }
.props-sub svg { stroke: #333; }
.fold { width: 100%; height: 55px; gap: 7px; padding-left: 13px; }
.props-sub + .fold { margin-top: 2px; }
.fold::before { content: ""; width: 5px; height: 8px; background: #777; clip-path: polygon(0 0, 100% 50%, 0 100%); }
.rail { width: 36px; flex: none; display: flex; flex-direction: column; align-items: center; gap: 12px; padding: 10px 2px 0 0; background: #d8d8d8; }
.grip { width: 16px; height: 4px; margin-bottom: 5px; border: solid #b4b4b4; border-width: 1px 0; }
.rail button { width: 24px; height: 24px; justify-content: center; border-radius: 3px; }
.rail button.on { background: #adadad; }
.rail-line { width: 30px; height: 1px; background: #c2c2c2; }

/* Status bar */
.status { display: flex; align-items: center; height: 35px; flex: none; padding-left: 10px; border-top: 1px solid #cacaca; color: #666; }
.status .sep { height: 24px; }
.page { width: 78px; }
.theme { width: 84px; padding-left: 10px; }
.views { margin-left: auto; display: flex; align-items: center; gap: 10px; padding-right: 15px; color: #444; }
.lines { gap: 3px; }
.views .on { width: 24px; height: 24px; margin: 0 -4px 0 -5px; justify-content: center; border-radius: 3px; background: #b9b9b9; }
.play { width: 31px; height: 24px; margin: 0 -6px 0 10px; justify-content: center; border-radius: 4px; background: var(--accent); }
.zoom { margin: 0 -7px 0 8px; }
.step { margin-left: 4px; }
.views input { appearance: none; width: 147px; height: 12px; margin: 0 -8px 0 1px; background: linear-gradient(#666, #666) center / 100% 1px no-repeat; }
.views input::-webkit-slider-thumb { appearance: none; width: 12px; height: 12px; border: 1px solid #555; border-radius: 50%; background: #e8e8e8; }
.fit { margin-left: 3px; }

/* Floating desktop widgets */
.meter { position: fixed; right: 17px; bottom: 137px; z-index: 2; display: flex; align-items: center; }
.speeds { width: 104px; height: 42px; padding-left: 47px; border-radius: 0 21px 21px 0; background: #30343f; box-shadow: 0 1px 6px #0006; color: #9a9ca4; }
.speeds p { display: flex; align-items: center; gap: 1px; height: 21px; margin: 0; font: 11px/21px Roboto, sans-serif; }
.speeds b { margin-left: 8px; color: #fff; font-weight: 500; font-size: 12px; }
.dial { position: absolute; left: -15px; width: 60px; height: 60px; padding: 4px; border-radius: 50%; background: #4e515d; box-shadow: 0 0 5px #0008; }
.dial-face { width: 52px; height: 52px; display: flex; align-items: center; justify-content: center; border-radius: 50%; background: radial-gradient(closest-side, #555967 92%, transparent 96%), conic-gradient(#3cc9d0, #46d3a0 25%, #e7d94a 50%, #e9a043 70%, #f0566c 88%, #555967 89%); color: #fff; }
.dial span { font: 300 24px/52px Roboto, sans-serif; }
.dial small { margin-top: 10px; font: 11px/12px Roboto, sans-serif; }
.ime { position: fixed; right: 38px; bottom: 104px; z-index: 3; display: flex; align-items: center; gap: 9px; width: 150px; height: 26px; padding-right: 5px; justify-content: flex-end; border: 1px solid #b9cfea; background: #fff; }
.ime b { color: #0f6fd8; font-size: 15px; }
.sogou { margin-right: -2px; }
.brand { position: fixed; right: 10px; bottom: 8px; z-index: 3; display: flex; align-items: center; opacity: .9; }
.brand strong { display: block; color: #5b9bd5; font: 700 21px/24px "Liberation Sans", "Noto Sans CJK SC", sans-serif; }
.brand a { display: block; color: #62c088; font: 700 16px/18px "Liberation Sans", sans-serif; }
```
